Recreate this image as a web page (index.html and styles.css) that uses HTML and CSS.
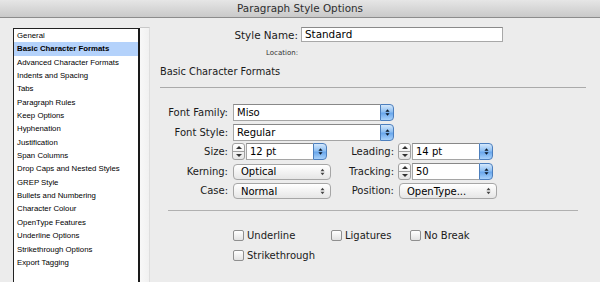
FILE: index.html
```html
<!DOCTYPE html>
<html>
<head>
  <meta charset="UTF-8">
  <title>Paragraph Style Options</title>
  <link rel="stylesheet" href="styles.css">
</head>
<body>
  <div class="window">
    <div class="titlebar">Paragraph Style Options</div>

    <div class="main">
      <!-- Category list -->
      <div class="sidebar">
        <ul class="nav-list">
          <li>General</li>
          <li class="selected">Basic Character Formats</li>
          <li>Advanced Character Formats</li>
          <li>Indents and Spacing</li>
          <li>Tabs</li>
          <li>Paragraph Rules</li>
          <li>Keep Options</li>
          <li>Hyphenation</li>
          <li>Justification</li>
          <li>Span Columns</li>
          <li>Drop Caps and Nested Styles</li>
          <li>GREP Style</li>
          <li>Bullets and Numbering</li>
          <li>Character Colour</li>
          <li>OpenType Features</li>
          <li>Underline Options</li>
          <li>Strikethrough Options</li>
          <li>Export Tagging</li>
        </ul>
        <div class="splitter"></div>
      </div>

      <!-- Settings panel -->
      <div class="panel">
        <div class="name-row">
          <div class="name-label">Style Name:</div>
          <div class="name-field">Standard</div>
        </div>
        <div class="location-row">Location:</div>
        <div class="section-title">Basic Character Formats</div>

        <div class="fields">
          <div class="label left">Font Family:</div>
          <div class="combo wide">
            <span class="combo-value">Miso</span>
            <span class="combo-btn"><svg viewBox="0 0 6 10"><polygon points="0.5,4 3,1 5.5,4"/><polygon points="0.5,6 3,9 5.5,6"/></svg></span>
          </div>

          <div class="label left">Font Style:</div>
          <div class="combo wide">
            <span class="combo-value">Regular</span>
            <span class="combo-btn"><svg viewBox="0 0 6 10"><polygon points="0.5,4 3,1 5.5,4"/><polygon points="0.5,6 3,9 5.5,6"/></svg></span>
          </div>

          <div class="label left">Size:</div>
          <div class="spin-combo">
            <span class="stepper"><span class="step-up"></span><span class="step-down"></span></span>
            <span class="combo-value">12 pt</span>
            <span class="combo-btn"><svg viewBox="0 0 6 10"><polygon points="0.5,4 3,1 5.5,4"/><polygon points="0.5,6 3,9 5.5,6"/></svg></span>
          </div>
          <div class="label">Leading:</div>
          <div class="spin-combo">
            <span class="stepper"><span class="step-up"></span><span class="step-down"></span></span>
            <span class="combo-value">14 pt</span>
            <span class="combo-btn"><svg viewBox="0 0 6 10"><polygon points="0.5,4 3,1 5.5,4"/><polygon points="0.5,6 3,9 5.5,6"/></svg></span>
          </div>

          <div class="label left">Kerning:</div>
          <div class="popup">Optical<svg viewBox="0 0 6 10"><polygon points="0.5,4 3,1 5.5,4"/><polygon points="0.5,6 3,9 5.5,6"/></svg></div>
          <div class="label">Tracking:</div>
          <div class="spin-combo">
            <span class="stepper"><span class="step-up"></span><span class="step-down"></span></span>
            <span class="combo-value">50</span>
            <span class="combo-btn"><svg viewBox="0 0 6 10"><polygon points="0.5,4 3,1 5.5,4"/><polygon points="0.5,6 3,9 5.5,6"/></svg></span>
          </div>

          <div class="label left">Case:</div>
          <div class="popup">Normal<svg viewBox="0 0 6 10"><polygon points="0.5,4 3,1 5.5,4"/><polygon points="0.5,6 3,9 5.5,6"/></svg></div>
          <div class="label">Position:</div>
          <div class="popup">OpenType...<svg viewBox="0 0 6 10"><polygon points="0.5,4 3,1 5.5,4"/><polygon points="0.5,6 3,9 5.5,6"/></svg></div>
        </div>

        <div class="separator"></div>

        <div class="checks">
          <label class="check"><span class="box"></span>Underline</label>
          <label class="check"><span class="box"></span>Ligatures</label>
          <label class="check"><span class="box"></span>No Break</label>
          <label class="check"><span class="box"></span>Strikethrough</label>
        </div>
      </div>
    </div>
  </div>
</body>
</html>
```

FILE: styles.css
```css
/* Base styles */
* {
  margin: 0;
  padding: 0;
  box-sizing: border-box;
}

body {
  font-family: 'DejaVu Sans', 'Liberation Sans', sans-serif;
  color: #1a1a1a;
  background: #ececec;
  overflow: hidden;
  height: 100vh;
}

.window {
  display: flex;
  flex-direction: column;
  height: 100%;
}

/* Title bar */
.titlebar {
  flex: none;
  height: 18px;
  line-height: 17px;
  text-align: center;
  font-size: 10.4px;
  color: #2e2e2e;
  background: linear-gradient(#e6e6e6, #c9c9c9);
  border-bottom: 1px solid #8c8c8c;
}

.main {
  flex: 1;
  display: flex;
  min-height: 0;
}

/* Category list */
.sidebar {
  flex: none;
  width: 150px;
  display: flex;
  padding: 9px 0 0 13px;
}

.nav-list {
  list-style: none;
  width: 127px;
  margin-top: 1px;
  background: #fff;
  border-top: 1px solid #222;
  border-left: 1px solid #222;
  border-right: 2px solid #1a1a1a;
  font-family: 'Liberation Sans', Arial, sans-serif;
  font-size: 7.8px;
  color: #000;
}

.nav-list li {
  height: 13.35px;
  line-height: 13.35px;
  padding-left: 3px;
  white-space: nowrap;
}

.nav-list li.selected {
  background: #b4d2fb;
  font-weight: bold;
}

.splitter {
  flex: 1;
  background: linear-gradient(90deg, #f8f8f8, #f1f1f1);
  border-top: 1px solid #c8c8c8;
  border-right: 1px solid #dedede;
}

/* Settings panel */
.panel {
  flex: 1;
  padding: 9px 14px 0 10px;
}

.name-row {
  display: flex;
  align-items: center;
}

.name-label {
  width: 138px;
  text-align: right;
  font-size: 10.4px;
  margin-right: 3px;
}

.name-field {
  width: 202px;
  height: 15px;
  line-height: 13px;
  padding-left: 3px;
  font-size: 10.4px;
  color: #000;
  background: #fff;
  border: 1px solid #a8a8a8;
  border-top-color: #8a8a8a;
}

.location-row {
  width: 138px;
  margin-top: 6px;
  text-align: right;
  font-size: 7px;
  line-height: 10px;
  color: #333;
}

.section-title {
  margin-top: 7px;
  padding-bottom: 8px;
  font-size: 9.8px;
  line-height: 14px;
  border-bottom: 1px solid #aaa;
}

/* Field grid */
.fields {
  display: grid;
  grid-template-columns: 68px 98px 58px 98px;
  grid-auto-rows: 17px;
  column-gap: 5px;
  row-gap: 2.5px;
  margin-top: 16px;
  font-size: 10px;
}

.label {
  text-align: right;
  line-height: 17px;
  white-space: nowrap;
}

.label.left {
  grid-column: 1;
}

.combo,
.spin-combo {
  display: flex;
  height: 17px;
  color: #000;
}

.combo.wide {
  grid-column: 2 / 4;
}

.spin-combo {
  width: 95px;
  margin-left: -1px;
}

.combo-value {
  flex: 1;
  line-height: 15px;
  padding-left: 3px;
  background: #fff;
  border: 1px solid #a5a5a5;
  border-top-color: #888;
  border-right: none;
}

.combo-btn {
  flex: none;
  width: 14px;
  display: flex;
  align-items: center;
  justify-content: center;
  border: 1px solid #4d7fbd;
  border-radius: 0 4px 4px 0;
  background: linear-gradient(#d4e8fc 0%, #8ebff2 45%, #6aa7ec 55%, #a9d2fb 100%);
}

.combo-btn svg {
  width: 5px;
  height: 9px;
  fill: #0d1a2a;
}

.stepper {
  flex: none;
  width: 13px;
  margin-right: 1px;
  display: flex;
  flex-direction: column;
  border: 1px solid #a0a0a0;
  border-radius: 3px;
  background: linear-gradient(#fff, #e6e6e6);
}

.step-up,
.step-down {
  flex: 1;
  display: flex;
  align-items: center;
  justify-content: center;
}

.step-up {
  border-bottom: 1px solid #a0a0a0;
}

.step-up::after,
.step-down::after {
  content: "";
  border-left: 3px solid transparent;
  border-right: 3px solid transparent;
}

.step-up::after {
  border-bottom: 3px solid #333;
}

.step-down::after {
  border-top: 3px solid #333;
}

/* Pop-up buttons */
.popup {
  display: flex;
  align-items: center;
  justify-content: space-between;
  height: 16px;
  margin-top: 1px;
  padding: 0 5px 0 7px;
  color: #000;
  border: 1px solid #a6a6a6;
  border-radius: 4px;
  background: linear-gradient(#ffffff, #f0f0f0 60%, #e6e6e6);
}

.popup svg {
  width: 5px;
  height: 8px;
  fill: #444;
}

/* Divider */
.separator {
  height: 1px;
  margin: 11px 8px 0 8px;
  background: #b0b0b0;
}

/* Checkboxes */
.checks {
  display: grid;
  grid-template-columns: 98px 79px auto;
  grid-auto-rows: 14px;
  row-gap: 6px;
  margin: 17px 0 0 73px;
  font-size: 10px;
}

.check {
  display: flex;
  align-items: center;
  white-space: nowrap;
}

.box {
  width: 11px;
  height: 11px;
  margin-right: 3px;
  border: 1px solid #8f8f8f;
  border-radius: 2px;
  background: linear-gradient(#ffffff, #e2e2e2);
}
```
